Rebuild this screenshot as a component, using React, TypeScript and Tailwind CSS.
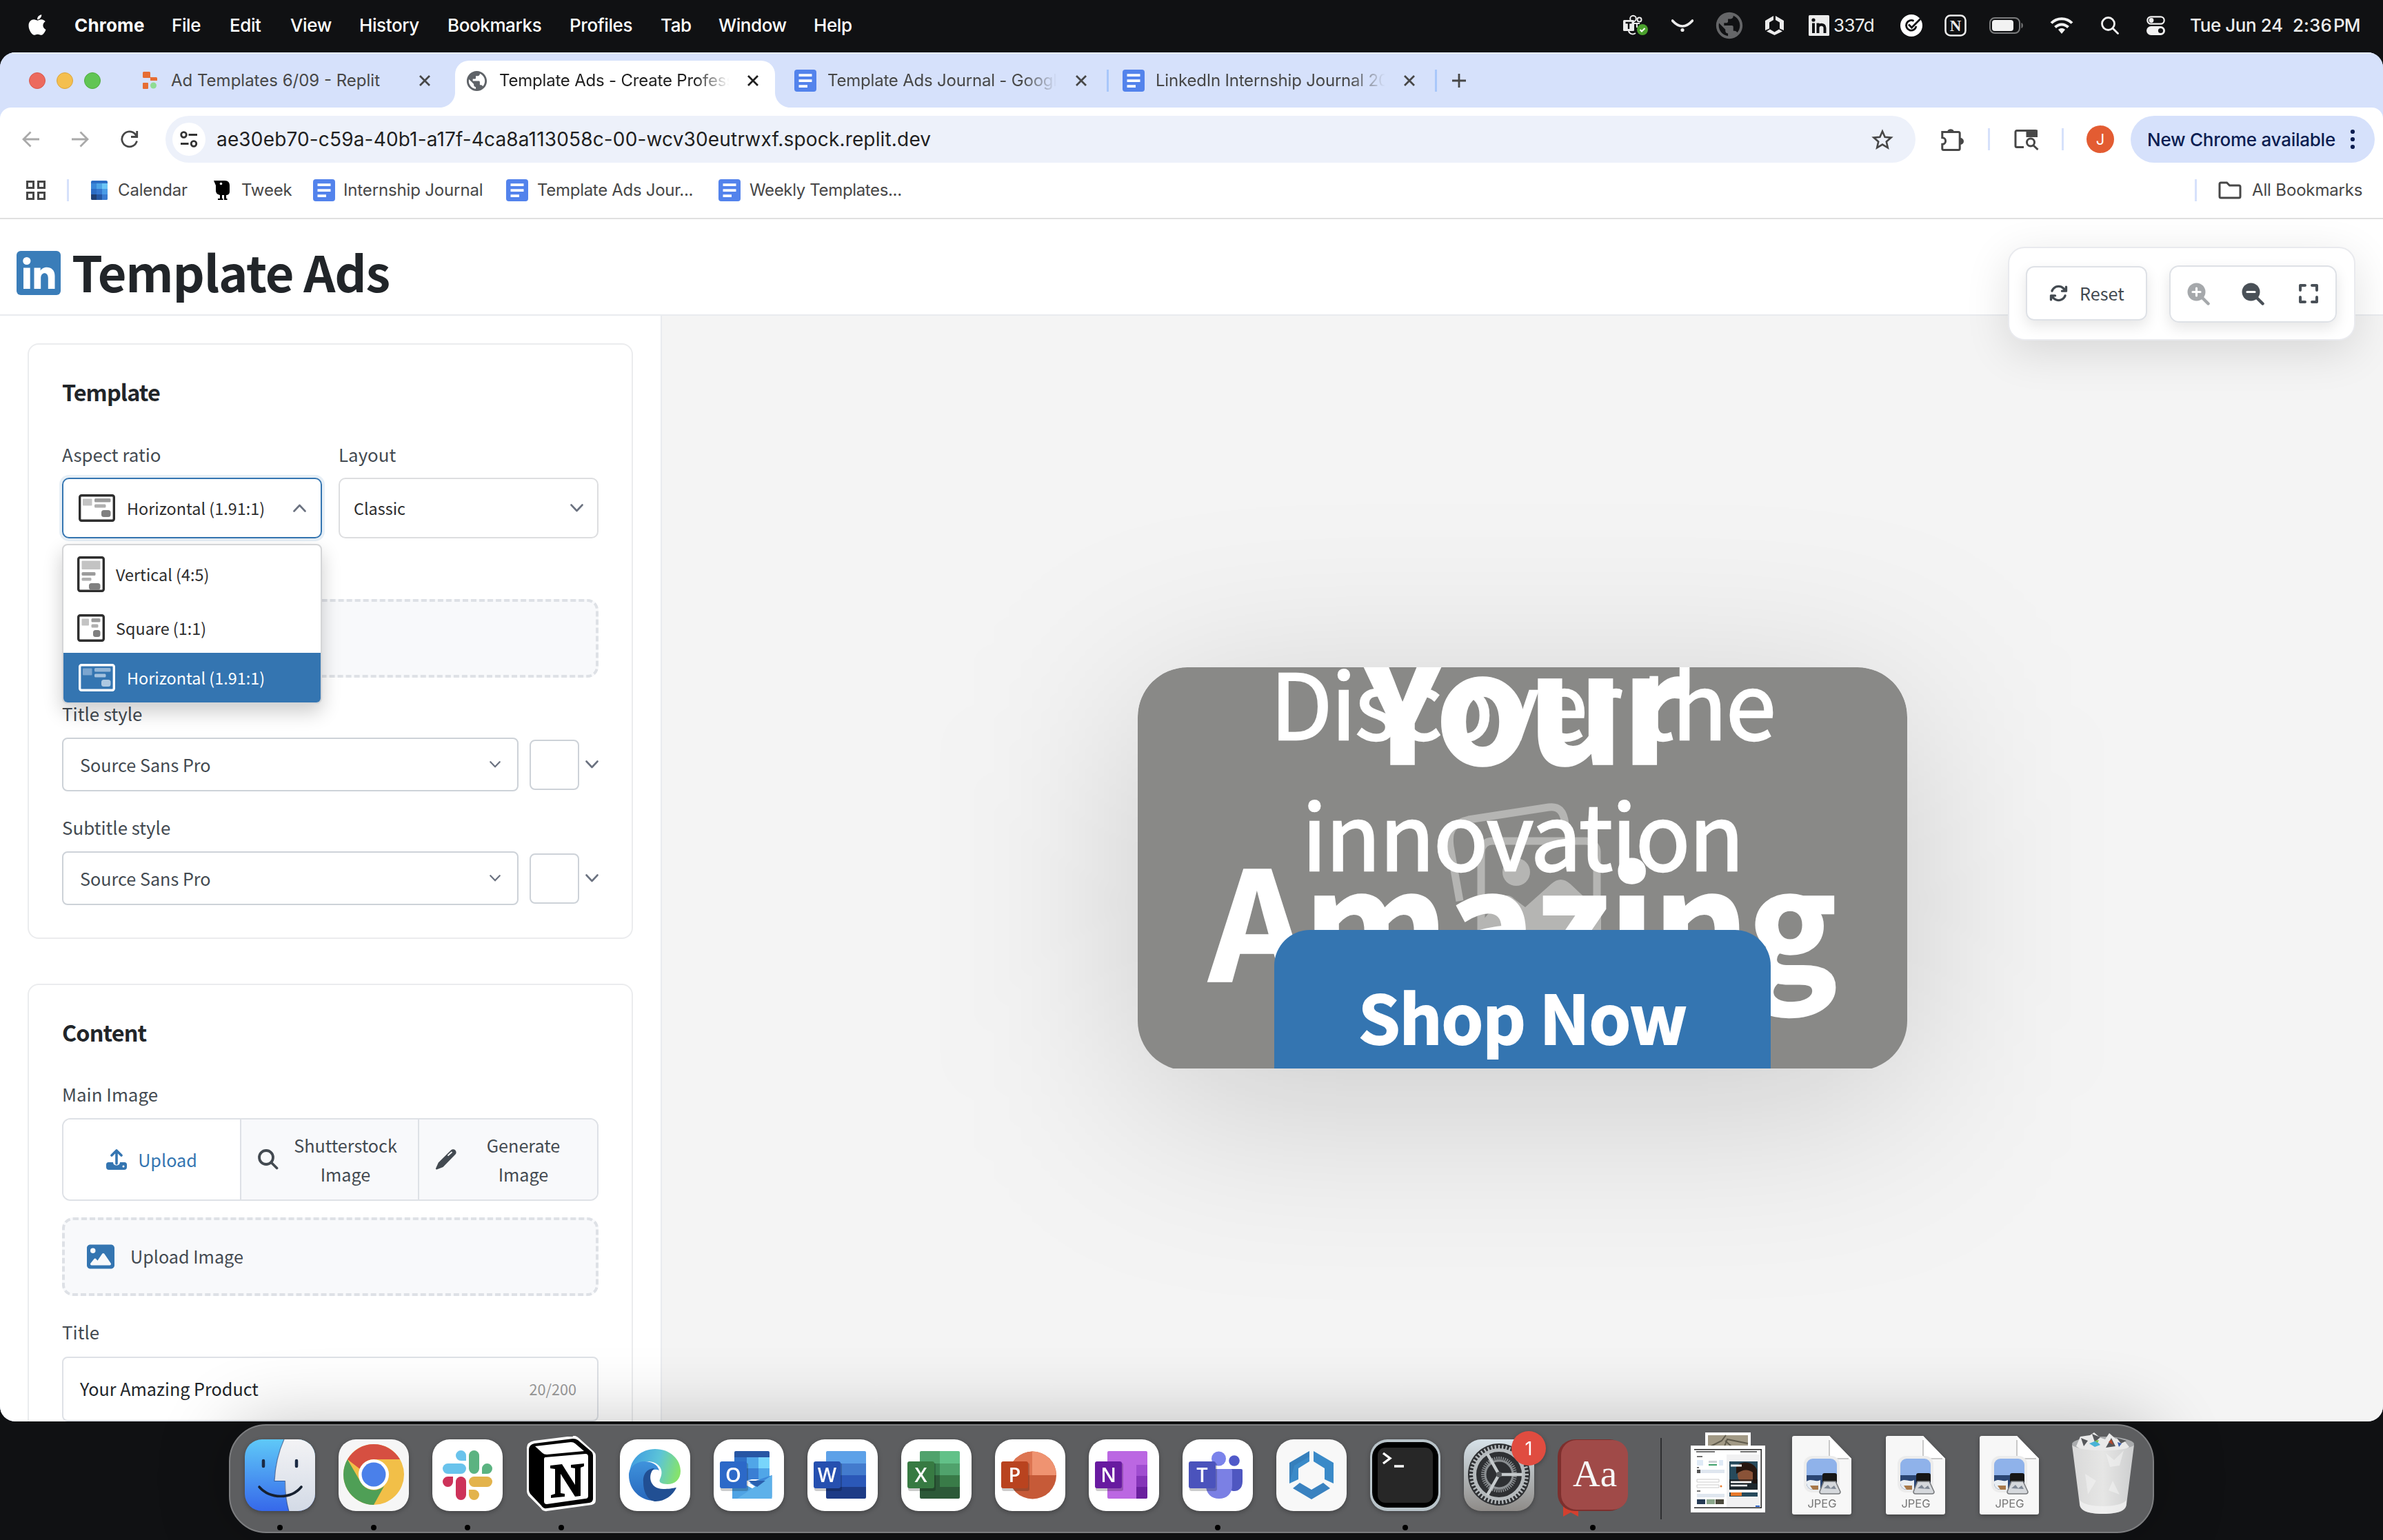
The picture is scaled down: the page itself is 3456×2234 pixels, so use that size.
import React from "react";
import type { ReactNode } from "react";
import { FaApple } from "react-icons/fa";
import { FaArrowsRotate, FaImage } from "react-icons/fa6";
import { MdPublic } from "react-icons/md";

/* ---------- menu bar ---------- */

const menuItems = [
  { label: "File", cls: "w-[84px]" },
  { label: "Edit", cls: "w-[88px]" },
  { label: "View", cls: "w-[100px]" },
  { label: "History", cls: "w-[128px]" },
  { label: "Bookmarks", cls: "w-[177px]" },
  { label: "Profiles", cls: "w-[132px]" },
  { label: "Tab", cls: "w-[84px]" },
  { label: "Window", cls: "w-[138px]" },
  { label: "Help", cls: "w-[80px]" },
];

function MenuBar() {
  return (
    <div className="flex h-[76px] shrink-0 items-center bg-[#101113] pb-[2px] text-[26px] font-medium leading-[36px] tracking-[-0.4px] text-white">
      <div className="flex w-[2354px] items-center pl-[38px]">
        <FaApple className="mb-[3px] h-[34px] w-[32px]" />
        <span className="ml-[38px] w-[141px] font-bold tracking-[0.2px]">Chrome</span>
        {menuItems.map((m) => (
          <span key={m.label} className={m.cls}>{m.label}</span>
        ))}
      </div>
      <div className="flex items-center text-[#ececec]">
        <svg className="h-[32px] w-[36px]" viewBox="0 0 36 32" fill="none">
          <circle cx="14.500" cy="6" r="4.300" stroke="#ececec" strokeWidth="2" />
          <circle cx="23.500" cy="7.500" r="3" stroke="#ececec" strokeWidth="2" />
          <path d="M16 13h8M8 24c1 4 6 6 10 3M20 13v6" stroke="#ececec" strokeWidth="2" />
          <rect x="0" y="8" width="16" height="16" rx="1.500" fill="#ececec" />
          <path d="M3.500 12h9M8 12v9" stroke="#101113" strokeWidth="2.400" />
          <circle cx="28" cy="22" r="8" fill="#4aa02c" />
          <path d="m24.500 22 2.500 2.500 4.500-4.500" stroke="#fff" strokeWidth="2" />
        </svg>
        <svg className="ml-[34px] h-[32px] w-[32px]" viewBox="0 0 32 32" fill="none">
          <path d="M1.500 9C6 14 11 17 16 17s10-3 14.500-8" stroke="#ececec" strokeWidth="3.600" strokeLinecap="round" />
          <circle cx="16" cy="22.500" r="2.600" fill="#ececec" />
        </svg>
        <MdPublic className="ml-[29px] h-[46px] w-[46px] text-[#656668]" />
        <svg className="ml-[29px] h-[28px] w-[27px]" viewBox="0 0 27 28" fill="#ececec">
          <path d="M12 0v6L6 9.500v9L0 21V7zM15 0v6l6 3.500v9l6 2.500V7zM7 19.500l6.500 4 6.500-4 5 3L13.500 28 2 22.500z" />
        </svg>
        <svg className="ml-[36px] h-[30px] w-[30px]" viewBox="0 0 30 30">
          <rect width="30" height="30" rx="1.500" fill="#ececec" />
          <circle cx="7" cy="7" r="2.600" fill="#101113" />
          <path d="M7 11.500V26M13.500 11.500V26M13.500 18.500c0-6 10-6.500 10 0V26" stroke="#101113" strokeWidth="4" fill="none" />
        </svg>
        <span className="ml-[6px] w-[60px] font-normal tracking-[-0.6px]">337d</span>
        <svg className="ml-[37px] h-[32px] w-[32px]" viewBox="0 0 32 32" fill="none">
          <circle cx="16" cy="16" r="16" fill="#fff" />
          <path d="M23 17a7.300 7.300 0 1 1-3.500-7.500" stroke="#101113" strokeWidth="2.800" />
          <path d="m12 14.500 4.500 4.500L29 6.500" stroke="#101113" strokeWidth="2.800" />
        </svg>
        <svg className="ml-[32px] h-[32px] w-[32px]" viewBox="0 0 32 32">
          <rect x="1.500" y="1.500" width="29" height="29" rx="7" fill="none" stroke="#ececec" strokeWidth="2.600" />
          <text x="16" y="24" textAnchor="middle" fontSize="23" fontWeight="700" fontFamily="Liberation Serif, serif" letterSpacing="0" fill="#ececec">N</text>
        </svg>
        <svg className="ml-[33px] h-[24px] w-[50px]" viewBox="0 0 50 24">
          <rect x="1" y="1" width="43" height="22" rx="7" fill="none" stroke="#7b7c7d" strokeWidth="2" />
          <rect x="4" y="4" width="31" height="16" rx="4" fill="#f2f2f2" />
          <path d="M46.500 8c3 1 3 7 0 8z" fill="#7b7c7d" />
        </svg>
        <svg className="ml-[38px] h-[26px] w-[34px]" viewBox="0 0 34 26" fill="none" stroke="#f2f2f2" strokeWidth="4">
          <path d="M2 9.500C10 1 24 1 32 9.500" />
          <path d="M7.500 15.500c5.500-5.500 13.500-5.500 19 0" />
          <path d="M12 19c3-2.600 7-2.600 10 0l-5 6z" fill="#f2f2f2" stroke="none" />
        </svg>
        <svg className="ml-[40px] h-[26px] w-[26px]" viewBox="0 0 26 26" fill="none" stroke="#f2f2f2" strokeWidth="2.800" strokeLinecap="round">
          <circle cx="10.500" cy="10.500" r="9" />
          <path d="m17.500 17.500 7 7" />
        </svg>
        <svg className="ml-[40px] h-[28px] w-[27px]" viewBox="0 0 27 28" fill="none">
          <rect x="1.300" y="1.300" width="24.400" height="10.400" rx="5.200" stroke="#f2f2f2" strokeWidth="2.200" />
          <circle cx="7" cy="6.500" r="3.400" fill="#f2f2f2" />
          <rect x="0" y="15" width="27" height="13" rx="6.500" fill="#f2f2f2" />
          <circle cx="20.500" cy="21.500" r="3.600" fill="#101113" />
        </svg>
        <span className="ml-[36px] w-[149px]">Tue Jun 24</span>
        <span className="w-[59px] tracking-[0.1px]">2:36</span>
        <span className="w-[68px] tracking-[-1px]">PM</span>
      </div>
    </div>
  );
}

/* ---------- browser chrome ---------- */

function DocIcon() {
  return (
    <svg className="h-[32px] w-[32px] shrink-0" viewBox="0 0 32 32">
      <rect width="32" height="32" rx="4" fill="#5383ec" />
      <path d="M6.500 8.200h19M6.500 16.200h19M6.500 24.200h12.500" stroke="#fff" strokeWidth="3.800" />
    </svg>
  );
}

function Close({ dark }: { dark?: boolean }) {
  return (
    <svg className="h-[16px] w-[16px] shrink-0" viewBox="0 0 16 16" stroke={dark ? "#1f1f1f" : "#474747"} strokeWidth="2.800">
      <path d="m1 1 14 14M15 1 1 15" />
    </svg>
  );
}

function TabTitle({ children, cls }: { children: ReactNode; cls: string }) {
  return <span className={`overflow-hidden whitespace-nowrap ${cls}`}>{children}</span>;
}

const fade = "[mask-image:linear-gradient(to_right,black_84%,transparent_99%)]";

function TabStrip() {
  return (
    <div className="flex h-[80px] shrink-0 items-center border-t-2 border-[#e6edfd] bg-[#d6e1fb] pl-[42px] text-[24px] leading-[32px] tracking-[-0.2px] text-[#474747]">
      <div className="flex gap-[16px]">
        <span className="size-[24px] rounded-full border border-[#d9574c] bg-[#ec6a5e]" />
        <span className="size-[24px] rounded-full border border-[#dba43c] bg-[#f4bf4f]" />
        <span className="size-[24px] rounded-full border border-[#4fac3f] bg-[#61c554]" />
      </div>
      <svg className="ml-[61px] h-[26px] w-[21px] shrink-0" viewBox="0 0 21 26" fill="#e66d33">
        <path d="M1.500 0h8a1.500 1.500 0 0 1 1.500 1.500V8h8.500A1.500 1.500 0 0 1 21 9.500V13H11V9H1.500A1.500 1.500 0 0 1 0 7.500v-6A1.500 1.500 0 0 1 1.500 0z" />
        <rect y="16" width="8" height="9" rx="1" />
        <circle cx="15.500" cy="20" r="4.500" fill="#8fdc93" />
      </svg>
      <TabTitle cls="ml-[20px] w-[360px] tracking-normal">Ad Templates 6/09 - Replit</TabTitle>
      <Close />
      <div className="relative ml-[36px] flex h-[68px] w-[464px] shrink-0 items-center self-end rounded-t-[20px] bg-white pb-[10px] pl-[14px] text-[#1f1f1f]">
        <svg className="absolute -left-[22px] bottom-0 size-[22px]" viewBox="0 0 22 22" fill="#fff"><path d="M22 0v22H0C12 22 22 12 22 0z" /></svg>
        <svg className="absolute -right-[22px] bottom-0 size-[22px]" viewBox="0 0 22 22" fill="#fff"><path d="M0 0v22h22C10 22 0 12 0 0z" /></svg>
        <MdPublic className="size-[35px] shrink-0 text-[#5f6368]" />
        <TabTitle cls={`ml-[15px] w-[337px] ${fade}`}>Template Ads - Create Profess</TabTitle>
        <span className="ml-[23px]"><Close dark /></span>
      </div>
      <div className="ml-[28px] flex items-center">
        <DocIcon />
        <TabTitle cls={`ml-[16px] w-[336px] ${fade}`}>Template Ads Journal - Google</TabTitle>
        <span className="ml-[24px]"><Close /></span>
        <span className="ml-[29px] h-[32px] w-[3px] bg-[#a8c7fa]" />
        <span className="ml-[20px]"><DocIcon /></span>
        <TabTitle cls={`ml-[16px] w-[336px] ${fade}`}>LinkedIn Internship Journal 2025</TabTitle>
        <span className="ml-[24px]"><Close /></span>
        <span className="ml-[29px] h-[32px] w-[3px] bg-[#a8c7fa]" />
        <svg className="ml-[22px] size-[20px]" viewBox="0 0 20 20" stroke="#474747" strokeWidth="2.800"><path d="M10 0v20M0 10h20" /></svg>
      </div>
    </div>
  );
}

function Toolbar() {
  return (
    <div className="flex h-[80px] shrink-0 items-center rounded-t-[16px] bg-white pl-[32px] pt-[12px]">
      <svg className="h-[24px] w-[25px]" viewBox="0 0 25 24" fill="none" stroke="#a9a9a9" strokeWidth="2.800"><path d="M25 12H3M12.500 1.500 2 12l10.500 10.500" /></svg>
      <svg className="ml-[47px] h-[24px] w-[25px]" viewBox="0 0 25 24" fill="none" stroke="#a9a9a9" strokeWidth="2.800"><path d="M0 12h22M12.500 1.500 23 12 12.500 22.500" /></svg>
      <svg className="ml-[46px] mr-[1px] h-[26px] w-[26px]" viewBox="0 0 26 26" fill="none" stroke="#474747" strokeWidth="2.800"><path d="M23.500 15.500A11 11 0 1 1 21 5.500l2.500 3M23.700 1v8.500H15" /></svg>
      <div className="ml-[38px] flex h-[68px] w-[2538px] shrink-0 items-center rounded-full bg-[#edf1fa] pl-[10px]">
        <span className="flex size-[48px] items-center justify-center rounded-full bg-white">
          <svg className="h-[24px] w-[26px]" viewBox="0 0 26 24" fill="none" stroke="#333" strokeWidth="2.800">
            <circle cx="5.500" cy="5.500" r="3.800" /><path d="M12.500 5.500H25M1 18.500h11.500" /><circle cx="20" cy="18.500" r="3.800" />
          </svg>
        </span>
        <span className="ml-[16px] text-[28px] leading-[36px] tracking-[0.16px] text-[#1f1f1f]">ae30eb70-c59a-40b1-a17f-4ca8a113058c-00-wcv30eutrwxf.spock.replit.dev</span>
        <svg className="ml-auto mr-[32px] h-[32px] w-[32px]" viewBox="0 0 32 32" fill="none" stroke="#474747" strokeWidth="2.600">
          <path d="m16 4.500 3.600 8.300 9 .8-6.800 5.900 2 8.800-7.800-4.700-7.800 4.700 2-8.800-6.800-5.900 9-.8z" />
        </svg>
      </div>
      <svg className="ml-[37px] h-[34px] w-[34px]" viewBox="0 0 34 34" fill="none" stroke="#474747" strokeWidth="3">
        <path d="M1.800 6.500h23.400a2 2 0 0 1 2 2v22a2 2 0 0 1-2 2H3.800a2 2 0 0 1-2-2v-6.200a4.800 4.800 0 0 0 0-9.600z" />
        <path d="M10.500 6a3.800 3.800 0 0 1 7 0zM28 16.500a3.500 3.500 0 0 1 0 7z" fill="#474747" />
      </svg>
      <span className="ml-[34px] h-[32px] w-[3px] bg-[#d6e1fb]" />
      <svg className="ml-[35px] h-[32px] w-[36px]" viewBox="0 0 36 32" fill="none" stroke="#474747" strokeWidth="3">
        <path d="M14 27.500H4a2 2 0 0 1-2-2v-20a2 2 0 0 1 2-2h26.500a2 2 0 0 1 2 2V12" />
        <path d="M19 4h13.500v7.500H19z" fill="#474747" />
        <circle cx="24" cy="20.500" r="5.500" /><path d="m28 25 6.500 6" />
      </svg>
      <span className="ml-[33px] h-[32px] w-[3px] bg-[#d6e1fb]" />
      <span className="ml-[33px] flex size-[40px] items-center justify-center rounded-full bg-[#e35c32] text-[22px] text-white">J</span>
      <div className="ml-[24px] flex h-[68px] w-[354px] items-center rounded-full bg-[#d6e1fb] pl-[24px] text-[26px] font-medium tracking-[-0.25px] text-[#0b1d51]">
        <span className="w-[294px] whitespace-nowrap">New Chrome available</span>
        <svg className="h-[30px] w-[8px]" viewBox="0 0 8 30" fill="#0b1d51"><circle cx="4" cy="4" r="3.100" /><circle cx="4" cy="15" r="3.100" /><circle cx="4" cy="26" r="3.100" /></svg>
      </div>
    </div>
  );
}

function BookmarksBar() {
  return (
    <div className="flex h-[82px] shrink-0 items-center whitespace-nowrap border-b-[2px] border-[#e0e0e0] bg-white pl-[38px] text-[24px] leading-[32px] tracking-[-0.15px] text-[#474747]">
      <svg className="h-[28px] w-[28px]" viewBox="0 0 28 28" fill="none" stroke="#474747" strokeWidth="3">
        <path d="M1.500 1.500h9v9h-9zM17.500 1.500h9v9h-9zM1.500 17.500h9v9h-9zM17.500 17.500h9v9h-9z" />
      </svg>
      <span className="ml-[31px] h-[32px] w-[3px] bg-[#d6e1fb]" />
      <svg className="ml-[32px] h-[28px] w-[24px]" viewBox="0 0 24 28">
        <rect width="24" height="28" rx="2" fill="#2b6cc4" />
        <path d="M0 4h8v8H0z" fill="#3a86d8" /><path d="M8 4h8v8H8z" fill="#4fa5e6" /><path d="M16 4h8v8h-8z" fill="#6cc6f6" />
        <path d="M8 12h8v8H8z" fill="#3577cf" /><path d="M16 12h8v8h-8z" fill="#4a9be6" />
        <path d="M0 20h8v8H2a2 2 0 0 1-2-2z" fill="#1f3f73" /><path d="M8 20h8v8H8z" fill="#2557a3" /><path d="M16 20h8v6a2 2 0 0 1-2 2h-6z" fill="#3a7bd0" />
      </svg>
      <span className="ml-[15px] w-[139px]">Calendar</span>
      <svg className="h-[28px] w-[24px]" viewBox="0 0 24 28">
        <path d="M0 0h16c5 0 7 3 7 7v9c0 4-3 5-5 5v5h1.500v2H15v-7h-3v5h1.500v2H6v-2h3v-5c-4-1-6-3-6-7V7z" fill="#000" />
        <circle cx="10.500" cy="4.500" r="1.800" fill="#fff" />
      </svg>
      <span className="ml-[16px] w-[104px]">Tweek</span>
      <DocIcon />
      <span className="ml-[12px] w-[236px]">Internship Journal</span>
      <DocIcon />
      <span className="ml-[13px] w-[263px] tracking-[-0.3px]">Template Ads Jour...</span>
      <DocIcon />
      <span className="ml-[13px] tracking-[-0.35px]">Weekly Templates...</span>
      <span className="ml-auto h-[32px] w-[3px] bg-[#d6e1fb]" />
      <svg className="ml-[31px] h-[26px] w-[34px]" viewBox="0 0 34 26" fill="none" stroke="#474747" strokeWidth="3"><path d="M2 4a2 2 0 0 1 2-2h8.500l4 4H30a2 2 0 0 1 2 2v14a2 2 0 0 1-2 2H4a2 2 0 0 1-2-2z" /></svg>
      <span className="ml-[15px] w-[190px]">All Bookmarks</span>
    </div>
  );
}

/* ---------- sidebar ---------- */

function Chevron({ up, small }: { up?: boolean; small?: boolean }) {
  return (
    <svg className={`${small ? "w-[16px]" : "w-[19px]"} h-[12px]`} viewBox="0 0 19 12" fill="none" stroke="#6b7280" strokeWidth="2.600" strokeLinecap="round" strokeLinejoin="round">
      <path d={up ? "M1.500 10.500 9.500 2l8 8.500" : "m1.500 1.500 8 8.500 8-8.500"} />
    </svg>
  );
}

function RatioIcon({ kind, light }: { kind: "h" | "v" | "s"; light?: boolean }) {
  const line = light ? "#fff" : "#2d2d2d";
  const [a, b, c, d] = light ? ["#7ba5cf", "#92b5d7", "#a3c1de", "#adc8e1"] : ["#c3c3c3", "#9b9b9b", "#b0b0b0", "#808080"];
  if (kind === "h")
    return (
      <svg className="h-[40px] w-[53px]" viewBox="0 0 53 40">
        <rect x="1.700" y="1.700" width="49.600" height="36.600" rx="2.500" fill="none" stroke={line} strokeWidth="3.400" />
        <rect x="6" y="6.500" width="13.500" height="10" rx="1" fill={a} /><rect x="23" y="6" width="23.500" height="5.500" rx="1.500" fill={b} />
        <rect x="23" y="14.500" width="16.500" height="5" rx="1.500" fill={c} /><rect x="33" y="23" width="13.500" height="10" rx="3.500" fill={d} />
      </svg>
    );
  if (kind === "v")
    return (
      <svg className="h-[52px] w-[40px]" viewBox="0 0 40 52">
        <rect x="1.700" y="1.700" width="36.600" height="48.600" rx="2.500" fill="none" stroke={line} strokeWidth="3.400" />
        <rect x="6.500" y="6.500" width="27" height="12.500" rx="1" fill={a} /><rect x="6.500" y="23" width="20" height="5" rx="1.500" fill={b} />
        <rect x="6.500" y="31" width="14" height="4.500" rx="1.500" fill={c} /><rect x="17" y="39" width="16.500" height="9.500" rx="3.500" fill={d} />
      </svg>
    );
  return (
    <svg className="h-[40px] w-[40px]" viewBox="0 0 40 40">
      <rect x="1.700" y="1.700" width="36.600" height="36.600" rx="2.500" fill="none" stroke={line} strokeWidth="3.400" />
      <rect x="6.500" y="6.500" width="10.500" height="10" rx="1" fill={a} /><rect x="20.500" y="6" width="13" height="5.500" rx="1.500" fill={b} />
      <rect x="20.500" y="14.500" width="10" height="5" rx="1.500" fill={c} /><rect x="23" y="23" width="10.500" height="10" rx="3.500" fill={d} />
    </svg>
  );
}

function Label({ children, cls }: { children: ReactNode; cls: string }) {
  return <div className={`text-[25.9px] leading-[40px] text-[#434a51] ${cls}`}>{children}</div>;
}

function FontRow() {
  return (
    <div className="mt-[15px] flex h-[78px] items-center">
      <div className="flex h-full w-[662px] items-center justify-between rounded-[8px] border-2 border-[#cdd2d8] pl-[24px] pr-[24px] text-[25.2px] text-[#434a51]">
        <span className="pt-[1px]">Source Sans Pro</span>
        <Chevron small />
      </div>
      <div className="ml-[16px] h-[73px] w-[72px] rounded-[8px] border-2 border-[#cdd2d8]" />
      <span className="ml-[9px]"><Chevron /></span>
    </div>
  );
}

function TemplateCard() {
  return (
    <section className="rounded-[16px] border-2 border-[#ebecee] bg-white px-[48px] pb-[47px] pt-[48px]">
      <h2 className="text-[32.4px] font-bold leading-[40px] tracking-[-0.9px] text-[#212529]">Template</h2>
      <div className="mt-[51px] grid grid-cols-2 gap-[24px]">
        <div>
          <Label cls="">Aspect ratio</Label>
          <div className="relative mt-[14px]">
            <div className="flex h-[88px] items-center rounded-[10px] border-2 border-[#3475b1] pl-[22px] pr-[21px] text-[23.4px] text-[#2d2d2d] shadow-[0_0_0_4px_#e7eff6]">
              <RatioIcon kind="h" />
              <span className="ml-[17px] mr-auto pt-[1px]">Horizontal (1.91:1)</span>
              <Chevron up />
            </div>
            <div className="absolute left-0 top-[96px] z-10 w-full overflow-hidden rounded-[8px] border-2 border-[#d4d5d7] bg-white text-[23.4px] text-[#2d2d2d] shadow-[0_12px_28px_rgba(0,0,0,0.2)]">
              <div className="flex h-[83px] items-center gap-[16px] pl-[20px]"><RatioIcon kind="v" /><span className="pt-[2px]">Vertical (4:5)</span></div>
              <div className="flex h-[73px] items-center gap-[16px] pl-[20px]"><RatioIcon kind="s" /><span className="pt-[2px]">Square (1:1)</span></div>
              <div className="flex h-[72px] items-center gap-[17px] bg-[#3475b1] pl-[22px] text-white"><RatioIcon kind="h" light /><span className="pt-[1px]">Horizontal (1.91:1)</span></div>
            </div>
          </div>
        </div>
        <div>
          <Label cls="">Layout</Label>
          <div className="mt-[14px] flex h-[88px] items-center justify-between rounded-[10px] border-2 border-[#dddee0] pl-[20px] pr-[20px] text-[23.4px] text-[#2d2d2d]">
            <span className="pt-[1px]">Classic</span>
            <Chevron />
          </div>
        </div>
      </div>
      <div className="mt-[88px] h-[114px] rounded-[16px] border-4 border-dashed border-[#dee1e6] bg-[#f8f9fb]" />
      <Label cls="mt-[32px]">Title style</Label>
      <FontRow />
      <Label cls="mt-[32px]">Subtitle style</Label>
      <FontRow />
    </section>
  );
}

function ContentCard() {
  return (
    <section className="mt-[65px] shrink-0 rounded-[16px] border-2 border-[#ebecee] bg-white px-[48px] pb-[60px] pt-[48px]">
      <h2 className="text-[32.4px] font-bold leading-[40px] tracking-[-0.9px] text-[#212529]">Content</h2>
      <Label cls="mt-[50px]">Main Image</Label>
      <div className="mt-[15px] grid h-[120px] grid-cols-3 divide-x-2 divide-[#dee1e6] overflow-hidden rounded-[12px] border-2 border-[#dee1e6] text-[25.2px] leading-[42px] text-[#434a51]">
        <div className="flex items-center justify-center bg-white text-[#3475b1]">
          <svg className="mr-[16px] h-[30px] w-[30px]" viewBox="0 0 30 30" fill="none" stroke="currentColor" strokeWidth="3.600" strokeLinecap="round" strokeLinejoin="round">
            <path d="M15 21V3M8 9l7-7 7 7" />
            <path d="M3.500 19H10c0 6 10 6 10 0h6.500A3.500 3.500 0 0 1 30 22.500V26a4 4 0 0 1-4 4H4a4 4 0 0 1-4-4v-3.500A3.500 3.500 0 0 1 3.500 19z" fill="currentColor" stroke="none" />
            <circle cx="25" cy="25" r="1.500" fill="#fff" stroke="none" />
          </svg>
          Upload
        </div>
        <div className="flex items-center bg-[#f8f9fb] pl-[24px]">
          <svg className="h-[30px] w-[30px]" viewBox="0 0 30 30" fill="none" stroke="#434a51" strokeWidth="3.800" strokeLinecap="round"><circle cx="12" cy="12" r="10" /><path d="m19.500 19.500 8 8" /></svg>
          <span className="ml-[21px] w-[152px] text-center">Shutterstock Image</span>
        </div>
        <div className="flex items-center bg-[#f8f9fb] pl-[24px]">
          <svg className="h-[30px] w-[30px]" viewBox="0 0 30 30" fill="#434a51">
            <path d="M22 1.500a4.300 4.300 0 0 1 6.300 6.300L10.500 26 1.500 29.500c-1 .4-1.800-.6-1.500-1.500L3.800 19.500z" />
            <path d="m18 9 5-4.500" stroke="#f8f9fb" strokeWidth="1.800" strokeLinecap="round" />
          </svg>
          <span className="ml-[22px] w-[150px] text-center"><span className="block">Generate</span><span className="block">Image</span></span>
        </div>
      </div>
      <div className="mt-[24px] flex h-[114px] items-center rounded-[16px] border-4 border-dashed border-[#dee1e6] bg-[#f8f9fb] pl-[32px] text-[25.2px] text-[#434a51]">
        <FaImage className="h-[40px] w-[40px] text-[#3475b1]" />
        <span className="ml-[23px]">Upload Image</span>
      </div>
      <Label cls="mt-[32px]">Title</Label>
      <div className="mt-[16px] flex h-[94px] items-center justify-between rounded-[8px] border-2 border-[#dee1e6] pl-[24px] pr-[30px] text-[25.2px] text-[#212529]">
        Your Amazing Product
        <span className="text-[21.6px] text-[#999]">20/200</span>
      </div>
    </section>
  );
}

/* ---------- preview ---------- */

function ZoomIcon({ plus }: { plus?: boolean }) {
  return (
    <svg className="h-[33px] w-[33px]" viewBox="0 0 33 33" fill="none">
      <circle cx="13.500" cy="13.500" r="13" fill="currentColor" />
      <path d="m22 22 8.500 8.500" stroke="currentColor" strokeWidth="4.500" strokeLinecap="round" />
      <path d={plus ? "M8 13.500h11M13.500 8v11" : "M8 13.500h11"} stroke="#fff" strokeWidth="3.200" strokeLinecap="round" />
    </svg>
  );
}

function Controls() {
  return (
    <div className="absolute left-[2912px] top-[40px] flex h-[136px] w-[504px] items-center rounded-[24px] border-2 border-[#e9eaee] bg-white pl-[24px] shadow-[0_16px_64px_rgba(0,0,0,0.12)]">
      <div className="mt-[-1px] flex h-[79px] w-[176px] items-center rounded-[12px] border-2 border-[#dee1e6] pl-[32px] text-[25.2px] text-[#434a51] shadow-[0_8px_20px_rgba(0,0,0,0.1)]">
        <FaArrowsRotate className="h-[27px] w-[27px]" />
        <span className="ml-[17px] pt-[1px]">Reset</span>
      </div>
      <div className="ml-[32px] flex h-[83px] w-[243px] items-center rounded-[14px] border-2 border-[#dee1e6] pl-[24px] text-[#495057] shadow-[0_8px_20px_rgba(0,0,0,0.1)]">
        <span className="text-[#a5a8ab]"><ZoomIcon plus /></span>
        <span className="ml-[46px]"><ZoomIcon /></span>
        <svg className="ml-[50px] h-[28px] w-[28px]" viewBox="0 0 28 28" fill="none" stroke="currentColor" strokeWidth="4" strokeLinecap="round" strokeLinejoin="round">
          <path d="M2 9V2h7M19 2h7v7M26 19v7h-7M9 26H2v-7" />
        </svg>
      </div>
    </div>
  );
}

function AdPreview() {
  return (
    <div className="relative mt-[510px] h-[582px] w-[1116px]">
      <div className="absolute inset-x-0 top-[50px] h-[582px] rounded-[72px] bg-black/17 blur-[140px]" />
      <div className="relative h-[582px] overflow-hidden rounded-t-[72px]">
        <div className="relative h-[585px] overflow-hidden rounded-[72px] bg-[#898987] text-center text-white">
          <svg className="absolute left-[440px] top-[180px] h-[260px] w-[260px]" viewBox="0 0 260 260" fill="none" stroke="#b5b5b3" strokeWidth="11">
            <path d="M27 159 13 80c-3-24 4-34 27-39l116-18c14-2 22 5 24 25" />
            <path d="M58 240V88a16 16 0 0 1 16-16h136a16 16 0 0 1 16 16v152" />
            <circle cx="109" cy="117" r="20" fill="#b5b5b3" stroke="none" />
            <path d="m58 190 28-34c6-7 14-6 20 0l16 12 38-34c9-8 18-8 27 0l45 42v80H58z" fill="#b5b5b3" stroke="none" />
          </svg>
          <div className="absolute inset-x-0 top-[-112px] text-[217px] font-bold leading-[315px] tracking-[-2px] [-webkit-text-stroke:3.5px_white]">
            <p>Your</p>
            <p>Amazing</p>
          </div>
          <div className="absolute inset-x-0 top-[-46px] text-[131px] leading-[189.5px] tracking-[-1.7px] [-webkit-text-stroke:2.4px_white]">
            <p>Discover the</p>
            <p>innovation</p>
          </div>
          <div className="absolute left-[198px] top-[381px] h-[260px] w-[720px] rounded-[52px] bg-[#3475b1] pt-[74px] text-[97px] font-bold leading-[100px] tracking-[-1px] [-webkit-text-stroke:2px_white]">Shop Now</div>
        </div>
      </div>
    </div>
  );
}

function Page() {
  return (
    <div className="relative flex min-h-0 flex-1 flex-col font-['Noto_Sans_CJK_SC',sans-serif]">
      <header className="flex h-[140px] shrink-0 items-center border-b-2 border-[#e9ebef] bg-white pl-[24px] pt-[18px]">
        <svg className="h-[64px] w-[64px]" viewBox="0 0 64 64">
          <rect width="64" height="64" rx="6" fill="#3a7db9" />
          <circle cx="14.800" cy="14.500" r="5.600" fill="#fff" />
          <path d="M10 24.500h9.700V55H10zM25.500 24.500h9.200v4.200c3.800-7.300 20.800-7.500 20.800 7.500V55h-9.700V39.500c0-10-10.600-9.200-10.600 0V55h-9.700z" fill="#fff" />
        </svg>
        <h1 className="ml-[16px] whitespace-nowrap pb-[6px] text-[72px] font-bold leading-[90px] tracking-[-1.25px] text-[#212529]">Template Ads</h1>
      </header>
      <div className="flex min-h-0 flex-1">
        <aside className="w-[960px] shrink-0 overflow-hidden border-r-2 border-[#e9ebef] bg-white pl-[40px] pr-[40px] pt-[40px]">
          <TemplateCard />
          <ContentCard />
        </aside>
        <main className="flex flex-1 justify-center overflow-hidden bg-[#f4f4f4]">
          <AdPreview />
        </main>
      </div>
      <Controls />
    </div>
  );
}

/* ---------- dock ---------- */

function Tile({ children, fill = "#fff" }: { children: ReactNode; fill?: string }) {
  return (
    <svg className="h-[104px] w-[102px] overflow-visible drop-shadow-[0_2px_3px_rgba(0,0,0,0.3)]" viewBox="0 0 102 104">
      <rect width="102" height="104" rx="25" fill={fill} />
      {children}
    </svg>
  );
}

function OfficeLetter({ letter, fill }: { letter: string; fill: string }) {
  return (
    <g>
      <rect x="10" y="34" width="40" height="41" rx="3" fill="#000" opacity="0.2" />
      <rect x="9" y="32" width="39" height="39" rx="3" fill={fill} />
      <text x="28.500" y="62" textAnchor="middle" fontSize="29" fontWeight="600" fontFamily="Open Sans, sans-serif" fill="#fff">{letter}</text>
    </g>
  );
}

function Finder() {
  return (
    <svg className="h-[104px] w-[102px] drop-shadow-[0_2px_3px_rgba(0,0,0,0.3)]" viewBox="0 0 102 104">
      <defs>
        <linearGradient id="fb" x1="0" y1="0" x2="0" y2="1"><stop offset="0" stopColor="#5fc9f8" /><stop offset="1" stopColor="#3668ea" /></linearGradient>
        <linearGradient id="fw" x1="0" y1="0" x2="0" y2="1"><stop offset="0" stopColor="#f3f3f5" /><stop offset="1" stopColor="#d3dae6" /></linearGradient>
        <clipPath id="fc"><rect width="102" height="104" rx="25" /></clipPath>
      </defs>
      <g clipPath="url(#fc)">
        <rect width="102" height="104" fill="url(#fb)" />
        <path d="M57 0C48 20 44 40 43 60h15c0 16 2 30 6 44h40V0z" fill="url(#fw)" />
        <path d="M57 0C48 20 44 40 43 60.500h15.500c0 16 1.500 30 5.500 44" fill="none" stroke="#1d3a72" strokeWidth="1.200" opacity="0.600" />
      </g>
      <path d="M27 31v8M75 31v8" stroke="#1b2a44" strokeWidth="4.500" strokeLinecap="round" />
      <path d="M21 69c16 18 46 18 61 0" fill="none" stroke="#16202f" strokeWidth="3.600" strokeLinecap="round" />
    </svg>
  );
}

function ChromeIcon() {
  return (
    <Tile fill="#f6f6f6">
      <circle cx="51" cy="51" r="44" fill="#f2bf48" />
      <path d="M12.900 29A44 44 0 0 1 89.100 29H51a22 22 0 0 0-20 14z" fill="#d64f41" />
      <path d="M12.900 29 32 62a22 22 0 0 0 34 6L51 95A44 44 0 0 1 12.900 29z" fill="#4f9f56" />
      <circle cx="51" cy="51" r="22" fill="#fff" />
      <circle cx="51" cy="51" r="17.500" fill="#4a80ea" />
    </Tile>
  );
}

function Slack() {
  return (
    <Tile>
      <g fill="#69c3ec"><path d="M49 16v15h-7.500a7.500 7.500 0 1 1 7.500-7.500z" /><rect x="15" y="35" width="34" height="15" rx="7.500" /></g>
      <g fill="#5bb381"><rect x="53" y="16" width="15" height="34" rx="7.500" /><path d="M72 50V42.500a7.500 7.500 0 1 1 7.500 7.500z" /></g>
      <g fill="#cd3259"><path d="M30 54v7.500A7.500 7.500 0 1 1 22.500 54z" /><rect x="34" y="54" width="15" height="34" rx="7.500" /></g>
      <g fill="#e3b34c"><rect x="53" y="54" width="34" height="15" rx="7.500" /><path d="M53 73h7.500A7.500 7.500 0 1 1 53 80.500z" /></g>
    </Tile>
  );
}

function Notion() {
  return (
    <svg className="h-[110px] w-[102px] -translate-y-[2px]" viewBox="0 0 102 110">
      <path d="M12 8 68 1q4-1 8 3l22 20q2 2 2 5v64q0 5-5 6l-65 9q-5 1-8-4L4 86q-2-3-2-6V17q0-7 10-9z" fill="#fff" stroke="#fff" strokeWidth="2" strokeLinejoin="round" />
      <path d="M12 11 68 4q4 0 7 2l20 17q2 2 2 5v63q0 5-5 6l-62 8q-5 1-8-4L6 84q-2-3-2-6V20q0-7 8-9z" fill="#000" />
      <path d="m13 15 52-6q4 0 6 2l13 11-54 5q-4 0-6-2z" fill="#fff" />
      <path d="M28 31 86 26q4 0 4 4v57q0 4-4 4l-56 8q-4 0-4-4V34q0-3 2-3z" fill="#fff" />
      <path d="M35 43 52 41 71 71V47l-6-1v-4l19-2v4l-5 2v41l-8 1-21-33v28l6 1v4l-20 2v-4l6-2V48l-7-1z" fill="#000" />
    </svg>
  );
}

function Edge() {
  return (
    <Tile>
      <defs>
        <linearGradient id="e1" x1="0" y1="0.300" x2="1" y2="0.500"><stop offset="0" stopColor="#3f9be0" /><stop offset="0.550" stopColor="#5cc4d8" /><stop offset="1" stopColor="#86e36b" /></linearGradient>
        <linearGradient id="e2" x1="0" y1="0" x2="0" y2="1"><stop offset="0" stopColor="#3f93dc" /><stop offset="1" stopColor="#2767bd" /></linearGradient>
      </defs>
      <path d="M14 50C15 28 31 14 51 14c22 0 37 15 37 32 0 12-8 19-19 19-9 0-13-3-11-7 8-16-4-26-18-26-12 0-22 7-26 18z" fill="url(#e1)" />
      <path d="M13 52c0-12 11-20 23-20 10 0 19 5 21 13-8-4-17 2-17 13 0 14 9 25 22 29-24 8-49-9-49-35z" fill="url(#e2)" />
      <path d="M34 62c-1-14 8-20 16-20-10 8-8 30 13 30 8 0 13-1 19-2-5 11-17 20-30 20-9 0-18-10-18-28z" fill="#214f93" />
    </Tile>
  );
}

function Outlook() {
  return (
    <Tile>
      <rect x="30" y="17" width="51" height="40" rx="2" fill="#2756a4" />
      <path d="M30 26h18v16H30z" fill="#3172c9" /><path d="M48 26h17v16H48z" fill="#50a6e8" /><path d="M65 26h16v16H65z" fill="#78d5fb" />
      <path d="M48 42h17v16H48z" fill="#3a7fd4" /><path d="M65 42h16v16H65z" fill="#50a6e8" /><path d="M30 42h18v16H30z" fill="#2a5fae" />
      <path d="M27 58h28l-28 9zM84.500 52v32L52 63z" fill="#3c86d8" />
      <path d="M27 86V56l57.500 30z" fill="#4fa3e4" /><path d="M84.500 52v34H34z" fill="#5db1ea" /><path d="m50 60 25 0-12 9z" fill="#2a5fae" />
      <OfficeLetter letter="O" fill="#2c69c8" />
    </Tile>
  );
}

function Word() {
  return (
    <Tile>
      <path d="M27 35V19q0-2 2-2h54q2 0 2 2v16z" fill="#5da1e8" /><path d="M27 35h58v17H27z" fill="#437bcd" />
      <path d="M27 52h58v17H27z" fill="#2b58b8" /><path d="M27 69h58v15q0 2-2 2H29q-2 0-2-2z" fill="#1d3b86" />
      <OfficeLetter letter="W" fill="#2650b0" />
    </Tile>
  );
}

function Excel() {
  return (
    <Tile>
      <path d="M27 35V19q0-2 2-2h27v18z" fill="#50a26c" /><path d="M56 17h27q2 0 2 2v16H56z" fill="#62c188" />
      <path d="M27 35h29v17H27z" fill="#3a8050" /><path d="M56 35h29v17H56z" fill="#50a26c" /><path d="M56 52h29v17H56z" fill="#397b48" />
      <path d="M27 52h29v17h29v15q0 2-2 2H29q-2 0-2-2z" fill="#2c5938" />
      <OfficeLetter letter="X" fill="#377a42" />
    </Tile>
  );
}

function PowerPoint() {
  return (
    <Tile>
      <circle cx="54.500" cy="52" r="34.500" fill="#c65a38" />
      <path d="M20 52a34.500 34.500 0 0 1 34.500-34.500V52z" fill="#dd7552" /><path d="M54 17.500A34.500 34.500 0 0 1 89 52H54z" fill="#ef9371" />
      <OfficeLetter letter="P" fill="#b9431f" />
    </Tile>
  );
}

function OneNote() {
  return (
    <Tile>
      <rect x="27" y="17" width="58" height="69" rx="2" fill="#bb67e2" />
      <path d="M69 37h16v16H69z" fill="#a04dd0" /><path d="M69 53h16v16H69z" fill="#8534b8" /><path d="M69 69h16v15q0 2-2 2H69z" fill="#6a1f9e" />
      <OfficeLetter letter="N" fill="#681aa0" />
    </Tile>
  );
}

function Teams() {
  return (
    <Tile>
      <circle cx="75" cy="31" r="7.800" fill="#5059c9" /><path d="M60 43h25q2 0 2 2v16c0 18-20 18-25 4z" fill="#4f57c1" />
      <circle cx="52.500" cy="28" r="10.500" fill="#7b83eb" /><path d="M34 43h36q2 0 2 2v22c0 12-8 19-19 19s-19-7-19-19z" fill="#7b80e4" />
      <OfficeLetter letter="T" fill="#4b53bc" />
    </Tile>
  );
}

function Hexnode() {
  return (
    <Tile fill="#f8f8f8">
      <path d="M48 17v15L32 42v16L19 64V34zM54 17v15l16 10v16l13 6V34z" fill="#3a8ac8" />
      <path d="m34 63 17 10 17-10 10 8-27 16-27-16z" fill="#3a82c0" />
      <path d="M48 17v8L26 38l-7 26V34z" fill="#2f73b0" opacity="0.500" />
    </Tile>
  );
}

function Terminal() {
  return (
    <Tile fill="#b9c4ca">
      <rect x="3" y="4" width="96" height="95" rx="22" fill="#000" />
      <rect x="11" y="12" width="80" height="80" rx="11" fill="#272727" />
      <path d="m19 20 10 7.500L19 35M35 39h14" fill="none" stroke="#fff" strokeWidth="3.400" />
    </Tile>
  );
}

function Settings() {
  const teeth = Array.from({ length: 48 }, (_, i) => i * 7.5);
  return (
    <Tile fill="url(#sg)">
      <defs><linearGradient id="sg" x1="0" y1="0" x2="0" y2="1"><stop offset="0" stopColor="#d6e2e9" /><stop offset="1" stopColor="#8e8b88" /></linearGradient></defs>
      <circle cx="51" cy="51" r="45" fill="#2e3033" />
      {teeth.map((t) => <path key={t} d="M51 8v6" stroke="#b5babd" strokeWidth="2.400" transform={`rotate(${t} 51 51)`} />)}
      <circle cx="51" cy="51" r="35.500" fill="none" stroke="#b5babd" strokeWidth="5" />
      {teeth.map((t) => <path key={t} d="M51 25v5" stroke="#8b8f92" strokeWidth="1.600" transform={`rotate(${t} 51 51)`} />)}
      <circle cx="51" cy="51" r="20" fill="none" stroke="#8b8f92" strokeWidth="3" />
      <path d="M51 51h34M51 51 34 21M51 51 34 81" stroke="#c5cacc" strokeWidth="4.500" />
      <circle cx="51" cy="51" r="4" fill="#55585b" />
      <circle cx="94" cy="13" r="25" fill="#e04c40" />
      <text x="94" y="22.500" textAnchor="middle" fontSize="27" fontFamily="Inter, sans-serif" fill="#fff">1</text>
    </Tile>
  );
}

function Dictionary() {
  return (
    <svg className="h-[114px] w-[102px] translate-y-[5px]" viewBox="0 0 102 114">
      <path d="M8 95h22v17l-11-6-11 6z" fill="#d3402f" />
      <rect width="100" height="104" rx="25" fill="#7d2f2d" />
      <rect x="5" y="1" width="97" height="101" rx="22" fill="#a04a48" />
      <text x="54" y="68" textAnchor="middle" fontSize="55" fontFamily="Liberation Serif, serif" fill="#f6f6f6">Aa</text>
    </svg>
  );
}

function MinimizedWindow() {
  return (
    <svg className="h-[116px] w-[108px]" viewBox="0 0 108 116">
      <rect x="21" y="0" width="66" height="30" fill="#fff" /><rect x="25" y="4" width="58" height="26" fill="#a29a86" />
      <path d="m25 22 20-10 6-8M50 12l20 18M45 30l8-20 30 6" stroke="#5f5a4c" strokeWidth="2" fill="none" />
      <rect y="19" width="108" height="97" fill="#fff" /><path d="M5 24h98v1.500H5zM101.500 24h1.500v86h-1.500zM5 108.500h98v1.500H5z" fill="#222" />
      <rect x="52" y="32" width="49" height="76" fill="#f1f1f2" />
      <rect x="56" y="42" width="41" height="51" fill="#274a5c" /><circle cx="80" cy="62" r="12" fill="#8a5338" /><path d="M66 50c6-10 26-8 30 4v20h-6V58q-10-8-24 2z" fill="#26160f" />
      <rect x="56" y="68" width="41" height="15" fill="#16100e" opacity="0.600" /><rect x="56" y="83" width="41" height="4" fill="#fff" /><path d="M58 72h30M58 77h24" stroke="#fff" strokeWidth="2.500" />
      <path d="M58 48h16" stroke="#fff" strokeWidth="3" />
      <rect x="58" y="87" width="16" height="5" fill="#e9792a" />
      <path d="M8 28h27M72 28h24M9 35h8M9 51h3M9 85h5" stroke="#444" strokeWidth="1.300" />
      <rect x="9" y="40" width="9" height="8" fill="#dfeaf6" /><rect x="41" y="40" width="6" height="8" fill="#dfeaf6" /><rect x="26" y="41" width="12" height="3" fill="#cfd3d8" /><rect x="26" y="46" width="12" height="2" fill="#3fa06a" />
      <rect x="9" y="54" width="40" height="5" fill="#dfe6ef" /><rect x="9" y="54" width="5" height="5" fill="#555" />
      <path d="M9 68h32v4H9zM9 76h32v4H9z" fill="none" stroke="#ccc" />
      <circle cx="44" cy="78" r="1.500" fill="#e9792a" /><rect x="9" y="89" width="40" height="5" fill="#dfe6ef" />
      <rect x="9" y="97" width="12" height="7" fill="#253b55" /><rect x="23" y="97" width="12" height="7" fill="#8aa68a" /><rect x="36" y="97" width="12" height="7" fill="#4c4a3d" />
      <rect x="94" y="106" width="6" height="2" fill="#2d63c8" />
    </svg>
  );
}

function JpegFile() {
  return (
    <svg className="h-[116px] w-[86px] drop-shadow-[0_2px_3px_rgba(0,0,0,0.3)]" viewBox="0 0 86 116">
      <path d="M3 0h51l32 33v78q0 3-3 3H3q-3 0-3-3V3q0-3 3-3z" fill="#f7f7f7" />
      <path d="M54 0v28q0 5 5 5h27z" fill="#fff" /><path d="M54 6v22q0 5 5 5h23" fill="none" stroke="#c9c9c9" strokeWidth="2" />
      <rect x="17" y="29" width="52" height="53" rx="12" fill="#ececec" />
      <rect x="21" y="33" width="44" height="45" rx="9" fill="#8fb2ea" />
      <path d="M21 57h44v12a9 9 0 0 1-9 9H30a9 9 0 0 1-9-9z" fill="#2b4674" />
      <path d="M21 66c8-5 12 2 20-2v14H30a9 9 0 0 1-9-9z" fill="#e9eef3" /><path d="M26 72h12v6H30z" fill="#a8794a" />
      <rect x="44" y="54" width="21" height="14" rx="3" fill="#161616" />
      <path d="M46 66h17l7 15q0 3-3 3H43q-3 0-3-3z" fill="#d5d8dc" stroke="#77797c" strokeWidth="1.500" />
      <path d="m46 76 6-5 4 5 5-4 3 5z" fill="#7f8895" />
      <text x="43.500" y="104" textAnchor="middle" fontSize="16.500" fontFamily="Inter, sans-serif" fill="#777">JPEG</text>
    </svg>
  );
}

function Trash() {
  return (
    <svg className="h-[120px] w-[92px]" viewBox="0 0 92 120">
      <defs><linearGradient id="tg" x1="0" y1="0" x2="1" y2="0"><stop offset="0" stopColor="#d9d9d9" /><stop offset="0.500" stopColor="#e6e6e5" /><stop offset="1" stopColor="#cdcecf" /></linearGradient></defs>
      <ellipse cx="46" cy="17" rx="45" ry="11" fill="#a9abad" />
      <path d="m7 20 6-14 14-2 6-4 8 7 8 3 6-9 9 8 12 2 8 10-12 8H20z" fill="#e9e9e9" />
      <path d="m14 8 10 4-6 8zM30 2l4 12 8-7zM50 22l8-14 6 12zM66 8l6 8 8-4z" fill="#55575a" />
      <path d="m26 16 10-4 6 6-8 3z" fill="#49b3d6" /><path d="m34 12 6-1-2 4z" fill="#7fc34a" /><path d="m54 14 4-4 3 8z" fill="#b5472c" /><path d="m67 14 6 2-4 5z" fill="#3b5fae" />
      <path d="M1 18c10 11 80 11 90 0L80 104c-1 9-12 14-34 14s-33-5-34-14z" fill="url(#tg)" />
      <path d="m50 30 12 10 14-14-6 22-14 2zM20 60l16 10-12 20M60 70l10 20-16-6" fill="#f5f5f5" opacity="0.500" />
      <path d="M12 98c8 12 60 12 68 0l-.500 8c-1 8-12 12-33.500 12s-32-4-33.500-12z" fill="#f4f4f4" opacity="0.700" />
    </svg>
  );
}

const apps: { icon: ReactNode; open?: boolean }[] = [
  { icon: <Finder />, open: true },
  { icon: <ChromeIcon />, open: true },
  { icon: <Slack />, open: true },
  { icon: <Notion />, open: true },
  { icon: <Edge /> },
  { icon: <Outlook /> },
  { icon: <Word /> },
  { icon: <Excel /> },
  { icon: <PowerPoint /> },
  { icon: <OneNote /> },
  { icon: <Teams />, open: true },
  { icon: <Hexnode /> },
  { icon: <Terminal />, open: true },
  { icon: <Settings /> },
  { icon: <Dictionary />, open: true },
];

function Dock() {
  return (
    <div className="relative mx-auto mt-[4px] flex h-[158px] w-[2792px] shrink-0 rounded-[54px] border-2 border-[#7d7e80] bg-[#5d5e60] pl-[21px] shadow-[0_0_110px_rgba(0,0,0,0.24)]">
      <div className="flex gap-[34px]">
        {apps.map((a, i) => (
          <div key={i} className="flex w-[102px] flex-col items-center">
            <div className="mt-[20px] flex h-[104px] items-center">{a.icon}</div>
            {a.open && <span className="mt-[20px] size-[8px] rounded-full bg-black" />}
          </div>
        ))}
      </div>
      <span className="ml-[47px] mt-[18px] h-[118px] w-[2px] bg-[#2e2f31]" />
      <div className="ml-[42px] flex items-start pt-[10px]">
        <MinimizedWindow />
        <div className="ml-[39px] flex gap-[50px] pt-[5px]">
          <JpegFile />
          <JpegFile />
          <JpegFile />
        </div>
        <span className="ml-[47px]"><Trash /></span>
      </div>
    </div>
  );
}

export default function App() {
  return (
    <div className="flex h-[2234px] w-[3456px] flex-col overflow-hidden bg-[#101113] font-['Inter',sans-serif]">
      <MenuBar />
      <div className="flex h-[1986px] shrink-0 flex-col overflow-hidden rounded-[22px] bg-[#d6e1fb]">
        <TabStrip />
        <Toolbar />
        <BookmarksBar />
        <Page />
      </div>
      <Dock />
    </div>
  );
}
